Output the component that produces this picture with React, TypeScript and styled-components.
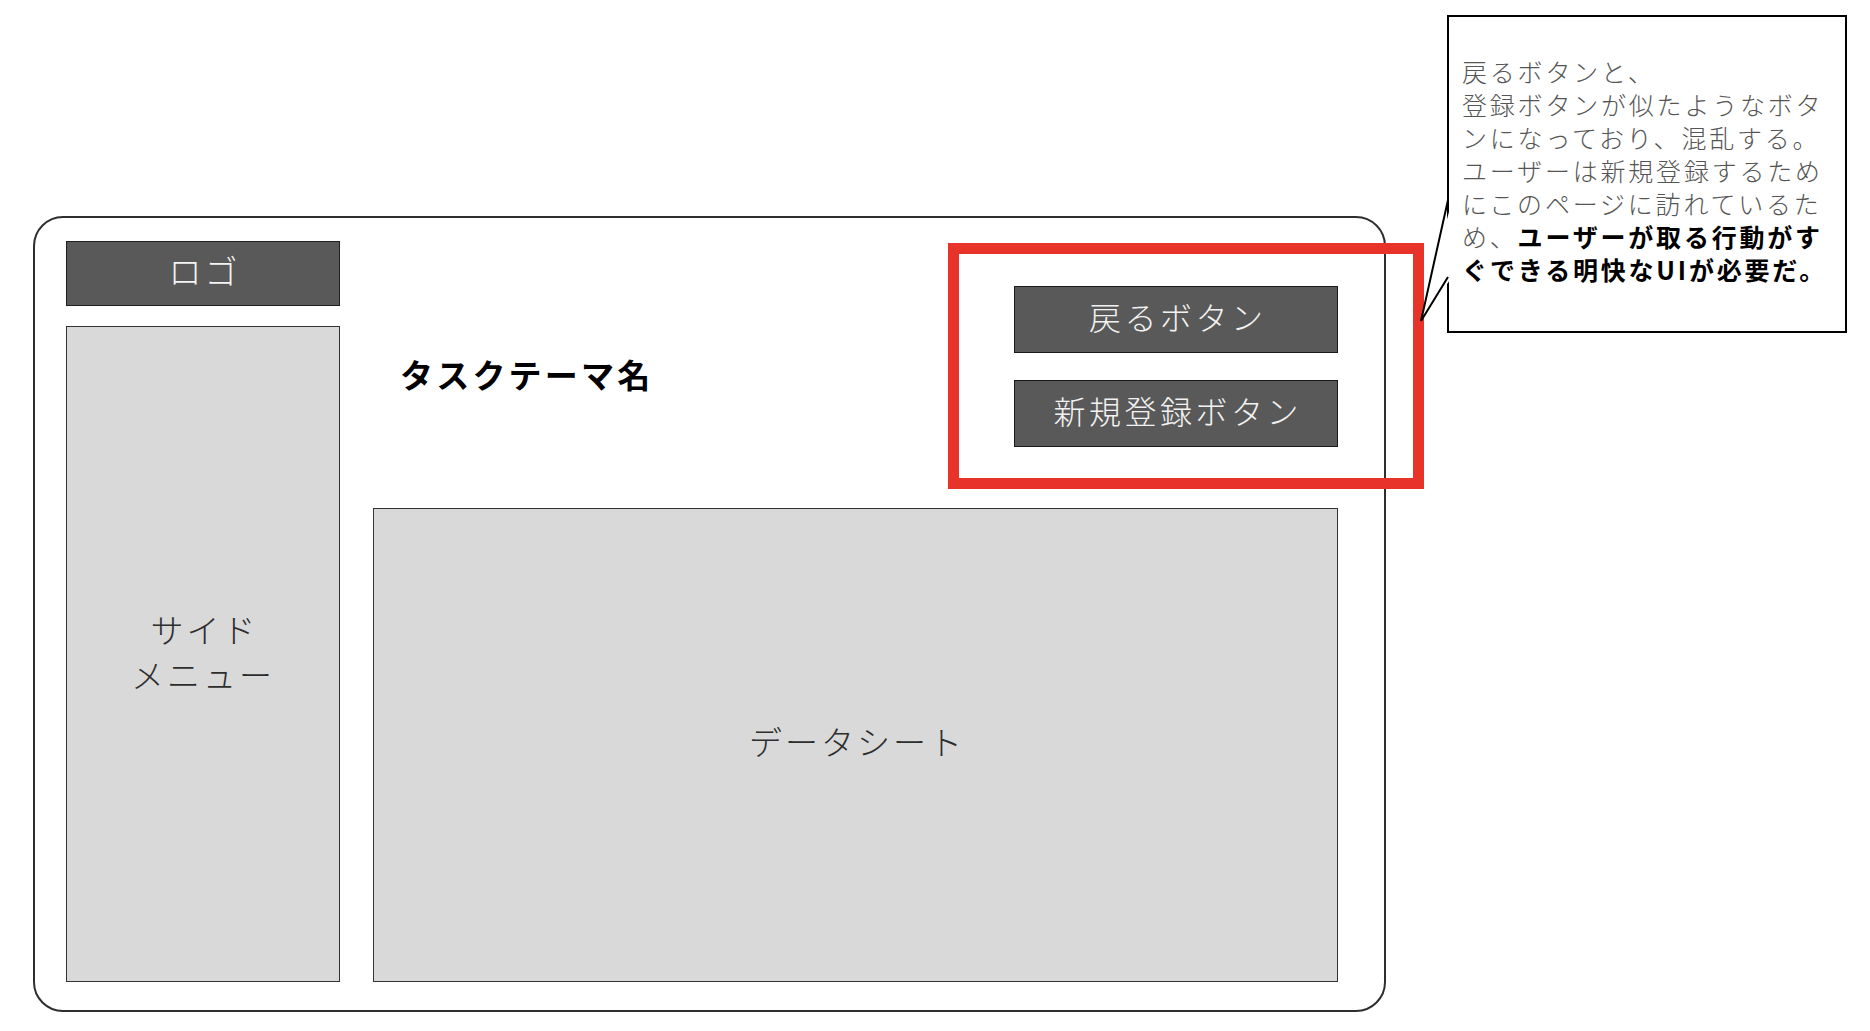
import React from 'react';
import styled, { createGlobalStyle } from 'styled-components';

const GlobalStyle = createGlobalStyle`
  html, body {
    margin: 0;
    padding: 0;
    background: #ffffff;
  }
  body {
    font-family: "Noto Sans CJK JP", "Noto Sans", sans-serif;
  }
`;

const Page = styled.div`
  position: relative;
  width: 1870px;
  height: 1031px;
  overflow: hidden;
  padding: 216px 0 0 33px;
  box-sizing: border-box;
`;

const Frame = styled.div`
  box-sizing: border-box;
  width: 1353px;
  height: 796px;
  border: 2px solid #2e2e2e;
  border-radius: 30px;
  padding: 23px 46px 28px 31px;
  display: grid;
  grid-template-columns: 274px 1fr;
  column-gap: 33px;
`;

const LeftColumn = styled.div`
  display: flex;
  flex-direction: column;
  gap: 20px;
`;

const Block = styled.div<{ $dark?: boolean }>`
  box-sizing: border-box;
  display: flex;
  align-items: center;
  justify-content: center;
  text-align: center;
  border: 1.5px solid ${(p) => (p.$dark ? '#1e1e1e' : '#333333')};
  background: ${(p) => (p.$dark ? '#595959' : '#d9d9d9')};
  color: ${(p) => (p.$dark ? '#f4f4f4' : '#2e2e2e')};
  font-weight: 300;
  font-size: 33px;
  letter-spacing: 3px;
  line-height: 45px;
  text-indent: 3px;
`;

const Logo = styled(Block)`
  height: 65px;
  flex: none;
  padding-bottom: 6px;
`;

const SideMenu = styled(Block)`
  flex: 1;
  padding-bottom: 4px;
`;

const MainColumn = styled.div`
  display: flex;
  flex-direction: column;
`;

const Header = styled.div`
  height: 267px;
  flex: none;
  display: flex;
  justify-content: space-between;
  align-items: center;
`;

const Title = styled.h1`
  margin: 0 0 0 27px;
  font-size: 33px;
  font-weight: 700;
  letter-spacing: 3.2px;
  color: #000000;
  padding-bottom: 2px;
`;

const ButtonGroup = styled.div`
  position: relative;
  align-self: flex-start;
  margin-top: 45px;
  display: flex;
  flex-direction: column;
  gap: 27px;
`;

const ActionButton = styled.button`
  box-sizing: border-box;
  width: 324px;
  height: 67px;
  border: 1.5px solid #1a1a1a;
  background: #595959;
  color: #f2f2f2;
  font-family: "Noto Sans CJK JP", "Noto Sans", sans-serif;
  font-weight: 300;
  font-size: 32px;
  letter-spacing: 3.5px;
  text-indent: 3.5px;
  padding: 0 0 8px;
  cursor: pointer;
`;

const Highlight = styled.div`
  position: absolute;
  top: -43px;
  right: -86px;
  bottom: -42px;
  left: -66px;
  border: 11px solid #e8332a;
  pointer-events: none;
`;

const DataSheet = styled(Block)`
  flex: 1;
  padding-bottom: 8px;
`;

const Callout = styled.div`
  position: absolute;
  left: 1447px;
  top: 15px;
  width: 400px;
  height: 318px;
  box-sizing: border-box;
  border: 2px solid #000000;
  background: #ffffff;
  padding: 38px 0 0 13px;
  font-size: 25px;
  font-weight: 300;
  line-height: 33px;
  letter-spacing: 2.8px;
  color: #555555;
  white-space: nowrap;
`;

const Strong = styled.strong`
  font-weight: 700;
  color: #000000;
`;

const Tail = styled.svg`
  position: absolute;
  left: 1415px;
  top: 195px;
  overflow: visible;
`;

export default function App() {
  return (
    <Page>
      <GlobalStyle />
      <Frame>
        <LeftColumn>
          <Logo $dark>ロゴ</Logo>
          <SideMenu>
            サイド
            <br />
            メニュー
          </SideMenu>
        </LeftColumn>
        <MainColumn>
          <Header>
            <Title>タスクテーマ名</Title>
            <ButtonGroup>
              <ActionButton>戻るボタン</ActionButton>
              <ActionButton>新規登録ボタン</ActionButton>
              <Highlight />
            </ButtonGroup>
          </Header>
          <DataSheet>データシート</DataSheet>
        </MainColumn>
      </Frame>
      <Callout>
        戻るボタンと、
        <br />
        登録ボタンが似たようなボタ
        <br />
        ンになっており、混乱する。
        <br />
        ユーザーは新規登録するため
        <br />
        にこのページに訪れているた
        <br />
        め、<Strong>ユーザーが取る行動がす</Strong>
        <br />
        <Strong>ぐできる明快なUIが必要だ。</Strong>
      </Callout>
      <Tail width="40" height="135" viewBox="0 0 40 135">
        <polygon points="37,5 6,126 37,82" fill="#ffffff" />
        <polyline points="33,5 6,126 33,82" fill="none" stroke="#000000" strokeWidth="2" strokeLinejoin="miter" />
      </Tail>
    </Page>
  );
}
